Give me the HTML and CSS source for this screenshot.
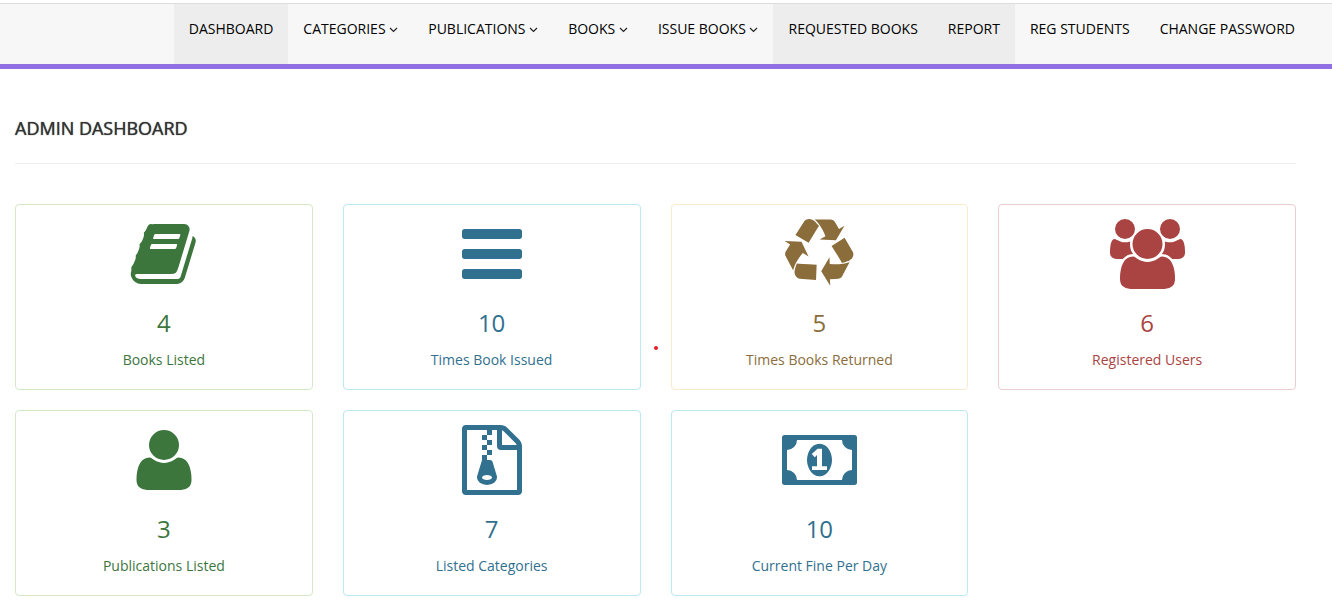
FILE: index.html
```html
<!DOCTYPE html>
<html lang="en">
<head>
<meta charset="utf-8">
<title>Admin Dashboard</title>
<link rel="stylesheet" href="styles.css">
</head>
<body>
<nav class="menu">
  <ul class="menu-list">
    <li><a class="menu-link active" href="#">DASHBOARD</a></li>
    <li><a class="menu-link" href="#">CATEGORIES <svg class="caret" viewBox="0 0 9 6"><path d="M1 1l3.500 3.500L8 1"/></svg></a></li>
    <li><a class="menu-link" href="#">PUBLICATIONS <svg class="caret" viewBox="0 0 9 6"><path d="M1 1l3.500 3.500L8 1"/></svg></a></li>
    <li><a class="menu-link" href="#">BOOKS <svg class="caret" viewBox="0 0 9 6"><path d="M1 1l3.500 3.500L8 1"/></svg></a></li>
    <li><a class="menu-link" href="#">ISSUE BOOKS <svg class="caret" viewBox="0 0 9 6"><path d="M1 1l3.500 3.500L8 1"/></svg></a></li>
    <li><a class="menu-link active" href="#">REQUESTED BOOKS</a></li>
    <li><a class="menu-link active" href="#">REPORT</a></li>
    <li><a class="menu-link" href="#">REG STUDENTS</a></li>
    <li><a class="menu-link" href="#">CHANGE PASSWORD</a></li>
  </ul>
</nav>
<main class="content">
  <h1 class="title">ADMIN DASHBOARD</h1>
  <div class="cards">
    <section class="card success">
      <svg class="icon" viewBox="-45 0 1792 1792"><path d="M1639 478q40 57 18 129l-275 906q-19 64-76.500 107.500t-122.500 43.500h-923q-77 0-148.500-53.500t-99.500-131.500q-24-67-2-127 0-4 3-27t4-37q1-8-3-21.500t-3-19.500q2-11 8-21t16.500-23.500 16.500-23.500q23-38 45-91.500t30-91.500q3-10 .5-30t-.5-28q3-11 17-28t17-23q21-36 42-92t25-90q1-9-2.500-32t.5-28q4-13 22-30.500t22-22.500q19-26 42.500-84.500t27.500-96.500q1-8-3-25.500t-2-26.500q2-8 9-18t18-23 17-21q8-12 16.500-30.500t15-35 16-36 19.500-32 26.500-23.500 36-11.500 47.500 5.500l-1 3q38-9 51-9h761q74 0 114 56t18 130l-274 906q-36 119-71.500 153.500t-128.500 34.500h-869q-27 0-38 15-11 16-1 43 24 70 144 70h923q29 0 56-15.500t35-41.500l300-987q7-22 5-57 38 15 59 43zm-1064 2q-4 13 2 22.500t20 9.500h608q13 0 25.500-9.500t16.500-22.500l21-64q4-13-2-22.500t-20-9.500h-608q-13 0-25.500 9.500t-16.500 22.500zm-83 256q-4 13 2 22.500t20 9.500h608q13 0 25.500-9.500t16.500-22.500l21-64q4-13-2-22.500t-20-9.500h-608q-13 0-25.500 9.500t-16.500 22.500z"/></svg>
      <h2 class="count">4</h2>
      <p class="label">Books Listed</p>
    </section>
    <section class="card info">
      <svg class="icon" viewBox="0 0 1792 1792"><path d="M1664 1344v128q0 26-19 45t-45 19h-1408q-26 0-45-19t-19-45v-128q0-26 19-45t45-19h1408q26 0 45 19t19 45zm0-512v128q0 26-19 45t-45 19h-1408q-26 0-45-19t-19-45v-128q0-26 19-45t45-19h1408q26 0 45 19t19 45zm0-512v128q0 26-19 45t-45 19h-1408q-26 0-45-19t-19-45v-128q0-26 19-45t45-19h1408q26 0 45 19t19 45z"/></svg>
      <h2 class="count">10</h2>
      <p class="label">Times Book Issued</p>
      <span class="dot"></span>
    </section>
    <section class="card warning">
      <svg class="icon" viewBox="0 0 1792 1792"><path d="M836 1169l-15 368-2 22-420-29q-36-3-67-31.500t-47-65.500q-11-27-14.500-55t4-65 12-55 21.500-64 19-53q78 12 509 28zm-387-586l180 379-147-92q-63 72-111.500 144.500t-72.500 125-39.500 94.500-18.500 63l-4 21-190-357q-17-26-18-56t6-47l8-18q35-63 114-188l-140-86zm1231 517l-188 359q-12 29-36.500 46.500t-43.500 20.500l-18 4q-71 7-219 12l8 164-230-367 211-362 7 173q170 16 283 5t170-33zm-785-924q-47 63-265 435l-317-187-19-12 225-356q20-31 60-45t80-10q24 2 48.500 12t42 21 41.500 33 36 34.500 36 39.500 32 35zm655 307l212 363q18 37 12.500 76t-27.500 74q-13 20-33 37t-38 28-48.500 22-47 16-51.500 14-46 12q-34-72-265-436l313-195zm-143-226l142-83-220 373-419-20 151-86q-34-89-75-166t-75.500-123.500-64.500-80-47-46.500l-17-13 405 1q31-3 58 10.500t39 28.500l11 15q39 61 112 190z"/></svg>
      <h2 class="count">5</h2>
      <p class="label">Times Books Returned</p>
    </section>
    <section class="card danger">
      <svg class="icon" viewBox="0 0 1920 1792"><path d="M593 896q-162 5-265 128h-134q-82 0-138-40.500t-56-118.500q0-353 124-353 6 0 43.500 21t97.500 42.500 119 21.500q67 0 133-23-5 37-5 66 0 159 81 256zm1071 637q0 120-73 189.500t-194 69.500h-874q-121 0-194-69.500t-73-189.500q0-53 3.500-103.500t14-109 26.500-108.500 43-97.500 62-81 85.500-53.500 111.500-20q10 0 43 21.500t73 48 107 48 135 21.500 135-21.500 107-48 73-48 43-21.500q61 0 111.500 20t85.500 53.500 62 81 43 97.500 26.500 108.500 14 109 3.500 103.500zm-1024-1277q0 106-75 181t-181 75-181-75-75-181 75-181 181-75 181 75 75 181zm704 384q0 159-112.500 271.500t-271.500 112.500-271.500-112.500-112.500-271.500 112.500-271.500 271.500-112.500 271.500 112.500 112.500 271.500zm576 225q0 78-56 118.500t-138 40.500h-134q-103-123-265-128 81-97 81-256 0-29-5-66 66 23 133 23 59 0 119-21.500t97.500-42.500 43.500-21q124 0 124 353zm-128-609q0 106-75 181t-181 75-181-75-75-181 75-181 181-75 181 75 75 181z"/></svg>
      <h2 class="count">6</h2>
      <p class="label">Registered Users</p>
    </section>
    <section class="card success">
      <svg class="icon" viewBox="0 0 1792 1792"><path d="M1600 1405q0 120-73 189.500t-194 69.500h-874q-121 0-194-69.500t-73-189.500q0-53 3.500-103.500t14-109 26.500-108.500 43-97.500 62-81 85.500-53.500 111.500-20q9 0 42 21.500t74.500 48 108 48 133.500 21.500 133.500-21.500 108-48 74.500-48 42-21.500q61 0 111.500 20t85.500 53.500 62 81 43 97.500 26.500 108.500 14 109 3.500 103.500zm-320-893q0 159-112.500 271.500t-271.500 112.500-271.500-112.500-112.500-271.500 112.500-271.500 271.500-112.500 271.500 112.500 112.500 271.500z"/></svg>
      <h2 class="count">3</h2>
      <p class="label">Publications Listed</p>
    </section>
    <section class="card info">
      <svg class="icon" viewBox="0 0 1792 1792"><path d="M768 384v-128h-128v128h128zm128 128v-128h-128v128h128zm-128 128v-128h-128v128h128zm128 128v-128h-128v128h128zm700-388q28 28 48 76t20 88v1152q0 40-28 68t-68 28h-1344q-40 0-68-28t-28-68v-1600q0-40 28-68t68-28h896q40 0 88 20t76 48zm-444-244v376h376q-10-29-22-41l-313-313q-12-12-41-22zm384 1528v-1024h-416q-40 0-68-28t-28-68v-416h-128v128h-128v-128h-512v1536h1280zm-627-721l107 349q8 27 8 52 0 83-72.500 137.500t-183.500 54.500-183.500-54.500-72.500-137.500q0-25 8-52 21-63 120-396v-128h128v128h79q22 0 39 13t23 34zm-141 465q53 0 90.500-19t37.500-45-37.500-45-90.500-19-90.500 19-37.500 45 37.500 45 90.500 19z"/></svg>
      <h2 class="count">7</h2>
      <p class="label">Listed Categories</p>
    </section>
    <section class="card info">
      <svg class="icon" viewBox="0 0 1920 1792"><path d="M768 1152h384v-96h-128v-448h-114l-148 137 77 80q42-37 55-57h2v288h-128v96zm512-256q0 70-21 142t-59.500 134-101.500 101-138 39-138-39-101.500-101-59.500-134-21-142 21-142 59.500-134 101.500-101 138-39 138 39 101.500 101 59.500 134 21 142zm512 256v-512q-106 0-181-75t-75-181h-1152q0 106-75 181t-181 75v512q106 0 181 75t75 181h1152q0-106 75-181t181-75zm128-832v1152q0 26-19 45t-45 19h-1792q-26 0-45-19t-19-45v-1152q0-26 19-45t45-19h1792q26 0 45 19t19 45z"/></svg>
      <h2 class="count">10</h2>
      <p class="label">Current Fine Per Day</p>
    </section>
  </div>
</main>
</body>
</html>
```
FILE: styles.css
```css
* {
  box-sizing: border-box;
}

body {
  margin: 0;
  padding-top: 3px;
  background: #fff;
  font-family: "Open Sans", sans-serif;
  font-size: 14px;
  line-height: 20px;
}

.menu {
  padding: 0 22px;
  background: #f7f7f7;
  border-top: 1px solid #ddd;
  border-bottom: 5px solid #9170e4;
}

.menu-list {
  display: flex;
  justify-content: flex-end;
  margin: 0;
  padding: 0;
  list-style: none;
}

.menu-link {
  display: block;
  padding: 15px 15px 25px;
  color: #000;
  text-decoration: none;
  white-space: nowrap;
}

.menu-link.active {
  background: #ededed;
}

.caret {
  width: 9px;
  height: 6px;
  vertical-align: 1px;
  fill: none;
  stroke: #222;
  stroke-width: 1.2;
}

.content {
  padding: 40px 36px 11px 15px;
}

.title {
  margin: 0 0 40px;
  padding: 9px 0 25px;
  border-bottom: 1px solid #eee;
  color: #333;
  font-size: 18px;
  font-weight: 400;
  line-height: 20px;
  text-shadow: 0 0 1px #333;
}

.cards {
  display: grid;
  grid-template-columns: repeat(4, 1fr);
  gap: 20px 30px;
}

.card {
  position: relative;
  padding: 14px 14px 19px;
  border: 1px solid;
  border-radius: 4px;
  text-align: center;
}

.card.success {
  border-color: #d6e9c6;
  color: #3c763d;
}

.card.info {
  border-color: #bce8f1;
  color: #31708f;
}

.card.warning {
  border-color: #faebcc;
  color: #8a6d3b;
}

.card.danger {
  border-color: #ebccd1;
  color: #a94442;
}

.icon {
  display: block;
  height: 70px;
  margin: 0 auto;
  fill: currentColor;
}

.count {
  margin: 19px 0 12px;
  font-size: 24px;
  font-weight: 400;
  line-height: 30px;
}

.label {
  margin: 0;
}

.dot {
  position: absolute;
  top: 141px;
  right: -18px;
  width: 4px;
  height: 4px;
  border-radius: 50%;
  background: #ed1c24;
}
```
